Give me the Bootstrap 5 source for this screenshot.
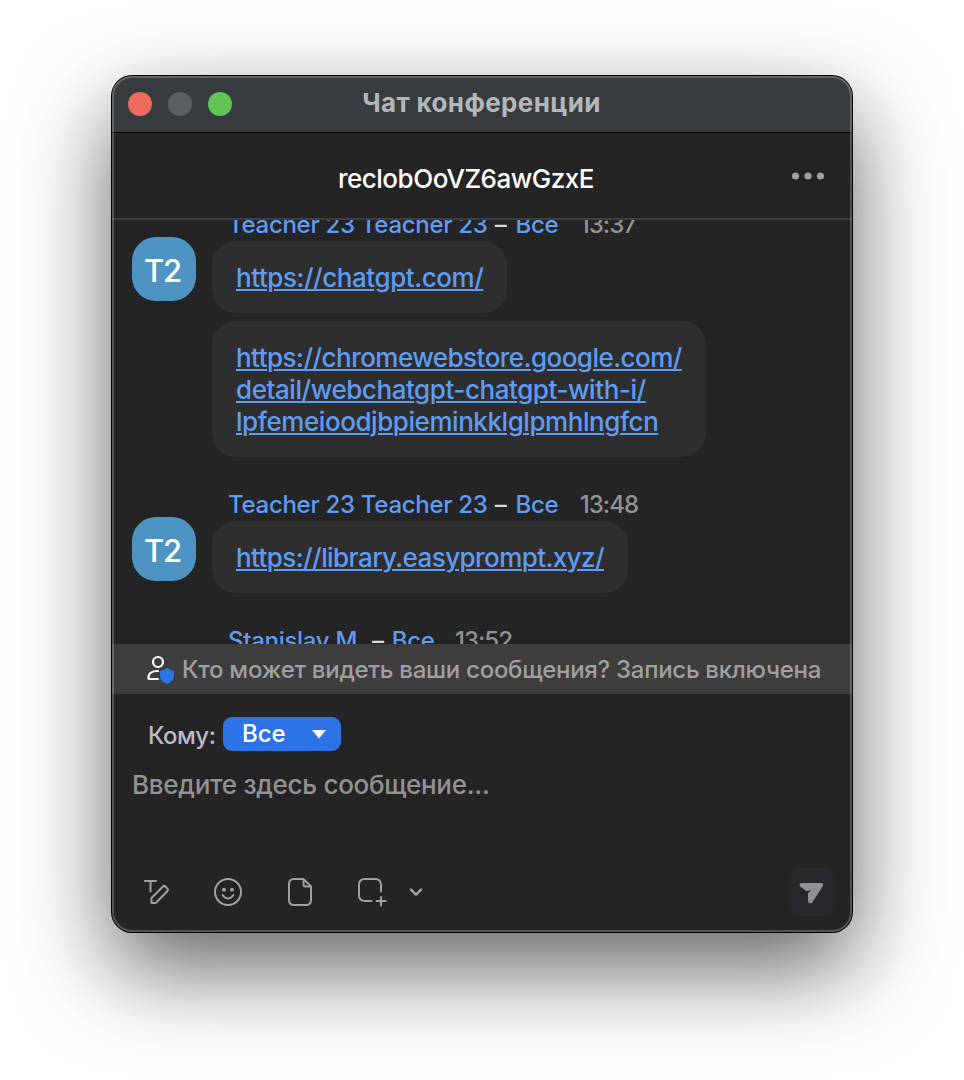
<!DOCTYPE html>
<html lang="ru">
<head>
<meta charset="utf-8">
<title>Чат конференции</title>
<link href="https://cdn.jsdelivr.net/npm/bootstrap@5.3.0/dist/css/bootstrap.min.css" rel="stylesheet">
<style>
body{font-family:Inter,sans-serif;font-weight:450;background:#fff;height:1080px;overflow:hidden}
.win{width:740px;height:856px;margin:76px 0 0 112px;background:#242424;border-radius:20px;box-shadow:0 0 0 1px #000,0 36px 92px rgba(0,0,0,.62)}
.rim{inset:0;border-radius:20px;box-shadow:inset 0 0 0 2px rgba(255,255,255,.22);pointer-events:none;z-index:5}
.titlebar{height:57px;background:#383c3e;border-bottom:1px solid #000;padding-left:16px;border-radius:20px 20px 0 0}
.dot{width:24px;height:24px}
.dot-close{background:#ed6a5e}
.dot-min{background:#5c6062}
.dot-zoom{background:#61c554}
.title{inset:0;top:-3px;color:#b3b7b9;font-weight:700;font-size:26px;letter-spacing:.36px;padding-right:1px}
.room{height:87px;border-bottom:2px solid #3e3e40;color:#fff;font-size:26px;letter-spacing:-.48px;padding:6px 32px 0 0}
.room svg{right:26px;top:37px}
.feed{height:424px;padding:0 20px}
.thread{margin-top:-11px}
.msg{margin-bottom:32px;gap:16px}
.avatar{width:64px;height:64px;border-radius:24px;background:#4d94c2;color:#fff;font-size:31px;font-weight:500;letter-spacing:-1.2px;margin-top:28px;padding:4px 3px 0 0}
.who{height:32px;line-height:32px;padding-left:16px;font-size:24px;letter-spacing:-.29px;color:#5f9cf5;white-space:pre}
.who i{font-style:normal;color:#d8d8d8;margin:0 3px 0 1px}
.when{color:#929292;font-weight:500;letter-spacing:-.95px;margin-left:3px}
.clipped{padding-left:80px}
.clipped i{margin:0 2px}
.clipped .when{margin-left:2px}
.bubble{background:#2e2e2e;border-radius:24px;padding:21px 24px 19px;line-height:32px;font-size:26px;letter-spacing:-.44px;white-space:nowrap}
.bubble a{color:#5f9cf5;text-decoration-thickness:2px;text-underline-offset:2px}
.tight{letter-spacing:-.53px}
.tighter{letter-spacing:-.58px}
.notice{height:50px;background:#3d3d3d;color:#a0a0a0;font-size:24px;letter-spacing:-.28px;padding-left:34px}
.notice span{margin-left:6px;padding-top:2px}
.to{height:34px;margin:23px 0 0 36px;font-size:24px;color:#bdb9cc}
.to>span{letter-spacing:-.5px;padding-top:3px;width:67px}
.pill{width:118px;height:34px;border-radius:9px;background:#2d73e6;color:#fff;padding:0 15px 0 19px}
.ph{font-size:26px;color:#929292;letter-spacing:-.28px;margin:18px 0 0 20px;line-height:32px}
.tools{height:48px;margin-top:67px;padding:0 16px 0 28px}
.tools svg{fill:none;stroke:#a0a0a0;stroke-width:2;stroke-linecap:round;stroke-linejoin:round}
.tools .caret{stroke-width:2.600;margin-left:-22px}
.tools .send{width:48px;height:48px;border-radius:12px;background:#28282c}
.tools .send svg{fill:#928f97;stroke:#928f97}
</style>
</head>
<body>
<main class="win position-relative overflow-visible">
 <div class="rim position-absolute"></div>
 <header class="titlebar position-relative d-flex align-items-center">
  <div class="d-flex gap-3"><span class="dot dot-close rounded-circle"></span><span class="dot dot-min rounded-circle"></span><span class="dot dot-zoom rounded-circle"></span></div>
  <div class="title position-absolute d-flex align-items-center justify-content-center">Чат конференции</div>
 </header>
 <div class="room position-relative d-flex align-items-center justify-content-center">reclobOoVZ6awGzxE
  <svg class="position-absolute" width="36" height="12" fill="#9a9fa8"><circle cx="5.500" cy="6" r="3.600"/><circle cx="18" cy="6" r="3.600"/><circle cx="30.500" cy="6" r="3.600"/></svg>
 </div>
 <section class="feed overflow-hidden"><div class="thread">
  <article class="msg d-flex align-items-start">
   <div class="avatar d-flex align-items-center justify-content-center flex-shrink-0">T2</div>
   <div class="d-flex flex-column align-items-start">
    <div class="who">Teacher 23 Teacher 23 <i>–</i> Все   <span class="when">13:37</span></div>
    <div class="bubble mb-2"><a href="#">https://chatgpt.com/</a></div>
    <div class="bubble"><a href="#"><span class="tight">https://chromewebstore.google.com/</span><br>detail/webchatgpt-chatgpt-with-i/<br>lpfemeioodjbpieminkklglpmhlngfcn</a></div>
   </div>
  </article>
  <article class="msg d-flex align-items-start">
   <div class="avatar d-flex align-items-center justify-content-center flex-shrink-0">T2</div>
   <div class="d-flex flex-column align-items-start">
    <div class="who">Teacher 23 Teacher 23 <i>–</i> Все   <span class="when">13:48</span></div>
    <div class="bubble tighter"><a href="#">https://library.easyprompt.xyz/</a></div>
   </div>
  </article>
  <article class="msg clipped d-flex"><div class="who">Stanislav M. <i>–</i> Все   <span class="when">13:52</span></div></article>
 </div></section>
 <div class="notice d-flex align-items-center">
  <svg width="30" height="32" viewBox="0 0 30 32" fill="none" stroke="#fff" stroke-width="2.200" stroke-linecap="round"><circle cx="12" cy="9" r="5"/><path d="M12 18C6 18 2.400 20.500 2.400 24.500Q2.400 26 4 26H12"/><path d="M21 14.500q3.500 3 7 3.500v5q0 5-7 8q-7-3-7-8v-5q3.500-.5 7-3.500z" fill="#2d73e6" stroke="none"/></svg>
  <span>Кто может видеть ваши сообщения? Запись включена</span>
 </div>
 <div class="to d-flex align-items-center"><span>Кому:</span><div class="pill ms-2 d-flex align-items-center justify-content-between">Все<svg width="14" height="9" fill="#fff"><path d="M0 0H14L7 8.500z"/></svg></div></div>
 <div class="ph">Введите здесь сообщение...</div>
 <div class="tools d-flex align-items-center">
  <div class="d-flex align-items-center" style="gap:36px">
   <svg width="36" height="36" viewBox="140 874 36 36"><path d="M145 881H156M150.500 881V891.500M151.500 903V898L163 886.500Q164.200 885.300 165.400 886.500L167.500 888.600Q168.500 889.800 167.500 891L156.500 902.300Q156 903 155 903Z"/></svg>
   <svg width="36" height="36" viewBox="211 874 36 36"><circle cx="227" cy="892" r="13"/><circle cx="223" cy="889.700" r="2" fill="#a0a0a0" stroke="none"/><circle cx="231" cy="889.700" r="2" fill="#a0a0a0" stroke="none"/><path d="M221.500 895Q224 898.500 227 898.500T232.500 895"/></svg>
   <svg width="36" height="36" viewBox="284 874 36 36"><path d="M294 879H303.500L311 886.500V900Q311 905 306 905H294Q289 905 289 900V884Q289 879 294 879ZM303.500 879V884.500Q303.500 886.500 305.500 886.500H311"/></svg>
   <svg width="36" height="36" viewBox="356 874 36 36"><path d="M371.500 901H365Q359 901 359 895V885Q359 879 365 879H375Q381 879 381 885V891.500M381 897V905.500M376.500 901H385.500"/></svg>
   <svg class="caret" width="20" height="20" viewBox="406 882 20 20"><path d="M411 889.700L416 894.700L421 889.700"/></svg>
  </div>
  <div class="send ms-auto d-flex"><svg width="48" height="48" viewBox="788 868 48 48"><path d="M801.500 884H821.500Q822.500 884.300 822 885.500L811.500 901.800Q809.500 903 809 901V893.800L814.500 888.500L806.500 890L801 886Q800 884.500 801.500 884Z"/></svg></div>
 </div>
</main>
<script src="https://cdn.jsdelivr.net/npm/bootstrap@5.3.0/dist/js/bootstrap.bundle.min.js"></script>
</body>
</html>
